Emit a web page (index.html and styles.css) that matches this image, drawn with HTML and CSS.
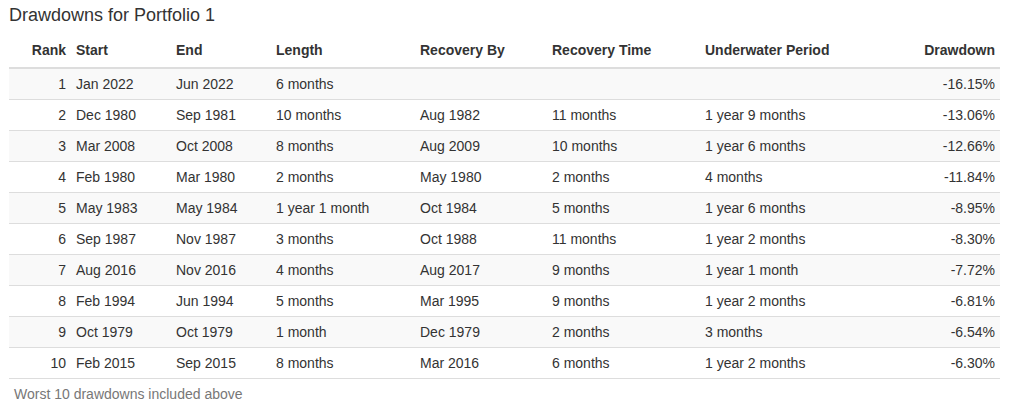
FILE: index.html
```html
<!DOCTYPE html>
<html>
<head>
<meta charset="utf-8">
<link rel="stylesheet" href="styles.css">
</head>
<body>
<div class="panel">
  <h4 class="title">Drawdowns for Portfolio 1</h4>
  <table class="dd">
    <colgroup>
      <col class="c-rank"><col class="c-start"><col class="c-end"><col class="c-len"><col class="c-rb"><col class="c-rt"><col class="c-uw"><col>
    </colgroup>
    <thead>
      <tr><th class="r">Rank</th><th>Start</th><th>End</th><th>Length</th><th>Recovery By</th><th>Recovery Time</th><th>Underwater Period</th><th class="r">Drawdown</th></tr>
    </thead>
    <tbody>
      <tr><td class="r">1</td><td>Jan 2022</td><td>Jun 2022</td><td>6 months</td><td></td><td></td><td></td><td class="r">-16.15%</td></tr>
      <tr><td class="r">2</td><td>Dec 1980</td><td>Sep 1981</td><td>10 months</td><td>Aug 1982</td><td>11 months</td><td>1 year 9 months</td><td class="r">-13.06%</td></tr>
      <tr><td class="r">3</td><td>Mar 2008</td><td>Oct 2008</td><td>8 months</td><td>Aug 2009</td><td>10 months</td><td>1 year 6 months</td><td class="r">-12.66%</td></tr>
      <tr><td class="r">4</td><td>Feb 1980</td><td>Mar 1980</td><td>2 months</td><td>May 1980</td><td>2 months</td><td>4 months</td><td class="r">-11.84%</td></tr>
      <tr><td class="r">5</td><td>May 1983</td><td>May 1984</td><td>1 year 1 month</td><td>Oct 1984</td><td>5 months</td><td>1 year 6 months</td><td class="r">-8.95%</td></tr>
      <tr><td class="r">6</td><td>Sep 1987</td><td>Nov 1987</td><td>3 months</td><td>Oct 1988</td><td>11 months</td><td>1 year 2 months</td><td class="r">-8.30%</td></tr>
      <tr><td class="r">7</td><td>Aug 2016</td><td>Nov 2016</td><td>4 months</td><td>Aug 2017</td><td>9 months</td><td>1 year 1 month</td><td class="r">-7.72%</td></tr>
      <tr><td class="r">8</td><td>Feb 1994</td><td>Jun 1994</td><td>5 months</td><td>Mar 1995</td><td>9 months</td><td>1 year 2 months</td><td class="r">-6.81%</td></tr>
      <tr><td class="r">9</td><td>Oct 1979</td><td>Oct 1979</td><td>1 month</td><td>Dec 1979</td><td>2 months</td><td>3 months</td><td class="r">-6.54%</td></tr>
      <tr><td class="r">10</td><td>Feb 2015</td><td>Sep 2015</td><td>8 months</td><td>Mar 2016</td><td>6 months</td><td>1 year 2 months</td><td class="r">-6.30%</td></tr>
    </tbody>
  </table>
  <div class="note">Worst 10 drawdowns included above</div>
</div>
</body>
</html>
```

FILE: styles.css
```css
html, body {
  margin: 0;
  padding: 0;
  background: #fff;
}
body {
  font-family: "Liberation Sans", Arial, sans-serif;
  font-size: 14px;
  line-height: 20px;
  color: #333;
}
.panel {
  padding: 5px 13px 0 9px;
}
.title {
  margin: 0 0 10px 0;
  font-size: 18px;
  line-height: 20px;
  font-weight: normal;
  color: #333;
}
.dd {
  width: 991px;
  border-collapse: collapse;
  table-layout: fixed;
}
.c-rank { width: 62px; }
.c-start { width: 100px; }
.c-end { width: 100px; }
.c-len { width: 144px; }
.c-rb { width: 132px; }
.c-rt { width: 153px; }
.c-uw { width: 153px; }
.dd th, .dd td {
  padding: 5px;
  text-align: left;
  white-space: nowrap;
}
.dd th {
  padding-bottom: 7px;
  font-weight: bold;
  border-bottom: 2px solid #ddd;
}
.dd td {
  border-bottom: 1px solid #ddd;
}
.dd tbody tr:nth-child(odd) {
  background: #f9f9f9;
}
.dd .r {
  text-align: right;
}
.note {
  padding: 5px;
  color: #777;
}
```
